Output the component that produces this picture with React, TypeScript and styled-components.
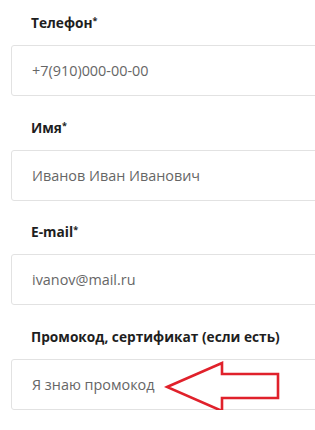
import React from "react";
import styled, { createGlobalStyle } from "styled-components";

const Global = createGlobalStyle`
  html, body { margin: 0; padding: 0; background: #fff; }
  body { font-family: "Open Sans", "Liberation Sans", sans-serif; overflow: hidden; }
`;

const Form = styled.form`
  display: flex;
  flex-direction: column;
  gap: 23.7px;
  padding: 15px 0 0 11px;
  width: 315px;
  box-sizing: border-box;
  overflow: hidden;
`;

const Field = styled.label`
  display: flex;
  flex-direction: column;
`;

const Label = styled.span`
  font-size: 13.7px;
  line-height: 16px;
  font-weight: 700;
  color: #1e1e1e;
  margin: 0 0 14px 20px;
`;

const Star = styled.sup`
  font-size: 9px;
  line-height: 0;
  vertical-align: 4px;
`;

const InputBox = styled.div`
  position: relative;
  width: 330px;
  height: 51px;
`;

const Input = styled.input`
  box-sizing: border-box;
  width: 100%;
  height: 100%;
  border: 1px solid #e2e2e2;
  border-radius: 3px;
  padding: 0 0 0 20px;
  font-family: inherit;
  font-size: 14.4px;
  color: #666;
  background: #fff;
  outline: none;
`;

const Arrow = styled.svg`
  position: absolute;
  left: 153px;
  top: 0;
  pointer-events: none;
`;

export default function App() {
  return (
    <>
      <Global />
      <Form>
        <Field>
          <Label>
            Телефон<Star>*</Star>
          </Label>
          <InputBox>
            <Input readOnly defaultValue="+7(910)000-00-00" />
          </InputBox>
        </Field>
        <Field>
          <Label>
            Имя<Star>*</Star>
          </Label>
          <InputBox>
            <Input readOnly defaultValue="Иванов Иван Иванович" />
          </InputBox>
        </Field>
        <Field>
          <Label>
            E-mail<Star>*</Star>
          </Label>
          <InputBox>
            <Input readOnly defaultValue="ivanov@mail.ru" />
          </InputBox>
        </Field>
        <Field>
          <Label>Промокод, сертификат (если есть)</Label>
          <InputBox>
            <Input readOnly defaultValue="Я знаю промокод" />
            <Arrow width="120" height="60" viewBox="0 0 120 60">
              <polygon
                points="3,28 58,4 58,15 114,15 114,39 58,39 58,52"
                fill="#fff"
                stroke="#e0212b"
                strokeWidth="2.6"
                strokeLinejoin="miter"
              />
            </Arrow>
          </InputBox>
        </Field>
      </Form>
    </>
  );
}
